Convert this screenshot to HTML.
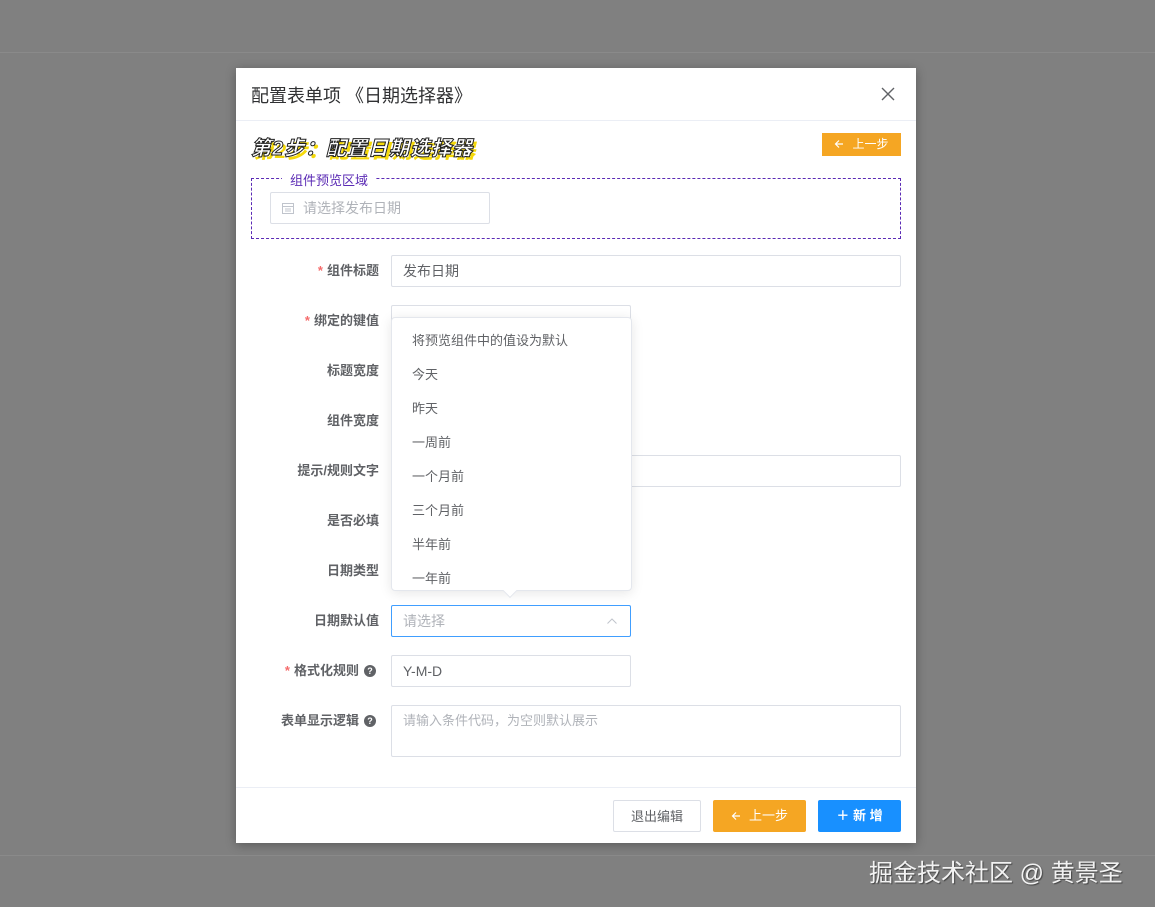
<!DOCTYPE html>
<html><head><meta charset="utf-8"><style>
*{box-sizing:border-box;margin:0;padding:0}
body{width:1155px;height:907px;background:#808080;position:relative;overflow:hidden;font-family:"Liberation Sans","Noto Sans CJK SC",sans-serif;font-size:13px;color:#606266}
.ab{position:absolute}
.modal{left:236px;top:68px;width:680px;height:775px;background:#fff;box-shadow:0 2px 10px rgba(0,0,0,.3)}
.inp{position:absolute;height:32px;border:1px solid #dcdfe6;border-radius:2px;background:#fff;padding-left:11px;line-height:30px;font-size:14px;color:#606266}
.ph{color:#b0b3b9}
.lbl{position:absolute;right:776px;width:200px;text-align:right;font-weight:bold;font-size:13px;color:#606266;line-height:20px}
.lbl i{color:#f56c6c;font-style:normal;margin-right:4px}
.q{display:inline-block;width:12px;height:12px;border-radius:50%;background:#606266;color:#fff;font-size:9px;line-height:12px;text-align:center;margin-left:5px;vertical-align:1px}
.dd{left:391px;top:317px;width:241px;height:274px;background:#fff;border:1px solid #e4e7ed;border-radius:4px;box-shadow:0 2px 12px rgba(0,0,0,.1)}
.dd div{height:34px;line-height:34px;padding-left:20px;font-size:13px;color:#606266}
.btn{position:absolute;top:800px;height:32px;line-height:32px;text-align:center;font-size:13px;border-radius:2px}
.arr{display:inline-block;vertical-align:-1px;margin-right:8px}
</style></head><body>
<div class="ab" style="left:0;top:52px;width:1155px;height:1px;background:#8a8a8a"></div>
<div class="ab" style="left:0;top:855px;width:1155px;height:1px;background:#8a8a8a"></div>
<div class="ab modal">
 <div class="ab" style="left:15px;top:14px;font-size:18px;color:#303133">配置表单项 《日期选择器》</div>
 <svg class="ab" style="left:645px;top:19px" width="14" height="14"><path d="M1 1L13 13M13 1L1 13" stroke="#606266" stroke-width="1.4"/></svg>
 <div class="ab" style="left:0;top:52px;width:680px;height:1px;background:#ebeef5"></div>
 <div class="ab" style="left:15px;top:64px;font-size:20px;font-weight:900;font-style:italic;letter-spacing:1px;color:#fff;-webkit-text-stroke:1px #222;text-shadow:3px 3px 0 #f5d90a">第2步：配置日期选择器</div>
 <div class="ab" style="left:586px;top:65px;width:79px;height:23px;background:#f5a623;color:#fff;font-size:12px;line-height:23px;text-align:center"><svg class="arr" width="10" height="10"><path d="M9 5H1.5M5 1.5L1.5 5L5 8.5" fill="none" stroke="#fff" stroke-width="1.2"/></svg>上一步</div>
 <div class="ab" style="left:15px;top:110px;width:650px;height:61px;border:1px dashed #5b2bb5"></div>
 <div class="ab" style="left:46px;top:102px;padding:0 8px;background:#fff;color:#5b2bb5;font-size:13px">组件预览区域</div>
 <div class="inp" style="left:34px;top:124px;width:220px;padding-left:32px"><span class="ph">请选择发布日期</span>
  <svg class="ab" style="left:11px;top:9px" width="12" height="12"><rect x="0.5" y="1.5" width="11" height="10" fill="none" stroke="#c0c4cc"/><path d="M1 4.5H11M3 7H9M3 9H9" stroke="#c0c4cc"/></svg></div>
</div>
<div class="lbl" style="top:261px"><i>*</i>组件标题</div>
<div class="inp" style="left:391px;top:255px;width:510px">发布日期</div>
<div class="lbl" style="top:311px"><i>*</i>绑定的键值</div>
<div class="inp" style="left:391px;top:305px;width:240px"></div>
<div class="lbl" style="top:361px">标题宽度</div>
<div class="lbl" style="top:411px">组件宽度</div>
<div class="lbl" style="top:461px">提示/规则文字</div>
<div class="inp" style="left:391px;top:455px;width:510px"></div>
<div class="lbl" style="top:511px">是否必填</div>
<div class="lbl" style="top:561px">日期类型</div>
<div class="lbl" style="top:611px">日期默认值</div>
<div class="inp" style="left:391px;top:605px;width:240px;border-color:#409eff"><span class="ph">请选择</span>
 <svg class="ab" style="left:215px;top:12px" width="10" height="6"><path d="M0.5 5.5L5 1L9.5 5.5" fill="none" stroke="#c0c4cc"/></svg></div>
<div class="lbl" style="top:661px;right:779px"><i>*</i>格式化规则<span class="q">?</span></div>
<div class="inp" style="left:391px;top:655px;width:240px">Y-M-D</div>
<div class="lbl" style="top:711px;right:779px">表单显示逻辑<span class="q">?</span></div>
<div class="inp" style="left:391px;top:705px;width:510px;height:52px;line-height:28px"><span class="ph" style="font-size:13px">请输入条件代码，为空则默认展示</span></div>
<div class="ab dd" style="padding-top:6px">
 <div>将预览组件中的值设为默认</div><div>今天</div><div>昨天</div><div>一周前</div><div>一个月前</div><div>三个月前</div><div>半年前</div><div>一年前</div>
</div>
<div class="ab" style="left:505px;top:586px;width:10px;height:10px;background:#fff;transform:rotate(45deg);border-right:1px solid #e4e7ed;border-bottom:1px solid #e4e7ed"></div>
<div class="ab" style="left:236px;top:787px;width:680px;height:1px;background:#ebeef5"></div>
<div class="btn" style="left:613px;width:88px;border:1px solid #dcdfe6;color:#606266;background:#fff">退出编辑</div>
<div class="btn" style="left:713px;width:93px;background:#f5a623;color:#fff"><svg class="arr" width="10" height="10"><path d="M9 5H1.5M5 1.5L1.5 5L5 8.5" fill="none" stroke="#fff" stroke-width="1.2"/></svg>上一步</div>
<div class="btn" style="left:818px;width:83px;background:#1890ff;color:#fff;font-weight:bold">＋ 新 增</div>
<div class="ab" style="left:869px;top:853px;font-size:24px;color:#f2f2f2;text-shadow:1px 1px 1px #444">掘金技术社区 @ 黄景圣</div>
</body></html>
